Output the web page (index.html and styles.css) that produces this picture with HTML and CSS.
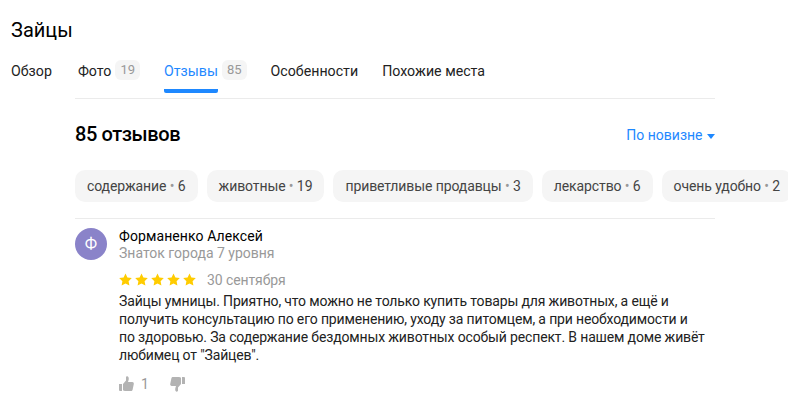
FILE: index.html
```html
<!DOCTYPE html>
<html lang="ru">
<head>
    <meta charset="UTF-8">
    <title>Зайцы</title>
    <link rel="stylesheet" href="styles.css">
</head>
<body>
    <header class="header">
        <h1 class="title">Зайцы</h1>
        <nav class="tabs">
            <a class="tab"><span class="tab-label">Обзор</span></a>
            <a class="tab"><span class="tab-label">Фото</span> <span class="tab-count">19</span></a>
            <a class="tab tab-active"><span class="tab-label">Отзывы</span> <span class="tab-count">85</span></a>
            <a class="tab"><span class="tab-label">Особенности</span></a>
            <a class="tab"><span class="tab-label">Похожие места</span></a>
        </nav>
    </header>
    <main class="content">
        <div class="reviews-head">
            <h2 class="reviews-title">85 отзывов</h2>
            <a class="sort">По новизне <span class="sort-arrow"></span></a>
        </div>
        <div class="chips">
            <span class="chip">содержание <i>•</i> 6</span>
            <span class="chip">животные <i>•</i> 19</span>
            <span class="chip">приветливые продавцы <i>•</i> 3</span>
            <span class="chip">лекарство <i>•</i> 6</span>
            <span class="chip">очень удобно <i>•</i> 2</span>
        </div>
        <article class="review">
            <div class="author">
                <div class="avatar">Ф</div>
                <div>
                    <div class="author-name">Форманенко Алексей</div>
                    <div class="author-level">Знаток города 7 уровня</div>
                </div>
            </div>
            <div class="review-body">
                <div class="rating">
                    <svg class="stars" width="77" height="14" viewBox="0 0 77 14">
                        <g fill="#fc0">
                            <path d="M6.500.5l1.900 4 4.400.6-3.200 3.100.8 4.400-3.900-2.100-3.900 2.100.8-4.400L.2 5.100l4.400-.6z"/>
                            <path transform="translate(16)" d="M6.500.5l1.900 4 4.400.6-3.200 3.100.8 4.400-3.900-2.100-3.900 2.100.8-4.400L.2 5.100l4.400-.6z"/>
                            <path transform="translate(32)" d="M6.500.5l1.900 4 4.400.6-3.200 3.100.8 4.400-3.900-2.100-3.900 2.100.8-4.400L.2 5.100l4.400-.6z"/>
                            <path transform="translate(48)" d="M6.500.5l1.900 4 4.400.6-3.200 3.100.8 4.400-3.900-2.100-3.900 2.100.8-4.400L.2 5.100l4.400-.6z"/>
                            <path transform="translate(64)" d="M6.500.5l1.900 4 4.400.6-3.200 3.100.8 4.400-3.900-2.100-3.900 2.100.8-4.400L.2 5.100l4.400-.6z"/>
                        </g>
                    </svg>
                    <span class="review-date">30 сентября</span>
                </div>
                <p class="review-text">Зайцы умницы. Приятно, что можно не только купить товары для животных, а ещё и<br>получить консультацию по его применению, уходу за питомцем, а при необходимости и<br>по здоровью. За содержание бездомных животных особый респект. В нашем доме живёт<br>любимец от "Зайцев".</p>
                <div class="votes">
                    <svg width="15" height="16" viewBox="0 0 15 16"><path fill="#b3b3b3" d="M0 8h3v7H1a1 1 0 0 1-1-1zM4 8l3-3.500V1.500C7 .6 8 0 8.800.5 9.800 1 10 2.500 9.600 4L9 6h4.300c1 0 1.700.9 1.500 1.900l-1.200 5.800c-.2.800-.8 1.300-1.600 1.300H6c-.8 0-1.400-.3-2-.8z"/></svg>
                    <span class="vote-count">1</span>
                    <svg class="vote-down" width="15" height="16" viewBox="0 0 15 16"><path fill="#b3b3b3" d="M15 8h-3V1h2a1 1 0 0 1 1 1zM11 8l-3 3.500v3c0 .9-1 1.500-1.800 1C5.200 15 5 13.500 5.400 12L6 10H1.700C.7 10 0 9.100.2 8.100l1.200-5.800C1.600 1.500 2.200 1 3 1h6c.8 0 1.400.3 2 .8z"/></svg>
                </div>
            </div>
        </article>
    </main>
</body>
</html>
```

FILE: styles.css
```css
html,
body {
    overflow: hidden;
}
body {
    margin: 0;
    background-color: #fff;
    color: #000;
    font-family: 'Roboto', 'Noto Sans', sans-serif;
    font-size: 14px;
}
.header {
    padding: 18px 0 0 11px;
}
.title {
    margin: 0;
    font-size: 20px;
    font-weight: 400;
    line-height: 24px;
}
.tabs {
    display: flex;
    gap: 24px;
    margin-top: 16px;
    height: 40px;
}
.tab {
    display: flex;
    align-items: flex-start;
    gap: 4px;
    line-height: 26px;
    font-size: 14.2px;
    color: #222;
}
.tab:first-child {
    margin-right: 2px;
}
.tab-label {
    display: block;
    height: 35px;
    box-sizing: border-box;
}
.tab-active {
    color: #1e88ff;
}
.tab-active .tab-label {
    border-bottom: 4px solid #1e88ff;
    border-radius: 2px;
}
.tab-count {
    padding: 0 5px;
    height: 20px;
    margin-top: 2px;
    line-height: 20px;
    font-size: 13px;
    color: #999;
    background-color: #f5f5f5;
    border-radius: 6px;
}
.content {
    width: 640px;
    margin-left: 75px;
    border-top: 1px solid #ebebeb;
}
.reviews-head {
    display: flex;
    justify-content: space-between;
    align-items: center;
    margin-top: 21px;
}
.reviews-title {
    margin: 0;
    font-size: 20px;
    font-weight: 500;
    line-height: 28px;
    letter-spacing: -0.4px;
}
.sort {
    padding-top: 2px;
    color: #1e88ff;
}
.sort-arrow {
    display: inline-block;
    border: 4px solid transparent;
    border-top: 5px solid #1e88ff;
    border-bottom: 0;
    margin-left: 1px;
    vertical-align: 1px;
}
.chips {
    display: flex;
    gap: 9px;
    margin-top: 22px;
    width: 713px;
    overflow: hidden;
    letter-spacing: -0.1px;
}
.chip {
    flex: none;
    padding: 0 12px;
    height: 32px;
    line-height: 32px;
    color: #444;
    background-color: #f5f5f5;
    border-radius: 10px;
    white-space: nowrap;
}
.chip i {
    font-style: normal;
    color: #999;
}
.review {
    margin-top: 16px;
    padding-top: 9px;
    border-top: 1px solid #ebebeb;
}
.author {
    display: flex;
    gap: 12px;
}
.avatar {
    width: 32px;
    height: 32px;
    border-radius: 50%;
    background-color: #8a83c9;
    color: #fff;
    text-align: center;
    line-height: 32px;
    font-size: 16px;
}
.author-name {
    line-height: 17px;
    letter-spacing: 0.1px;
}
.author-level {
    line-height: 16px;
    color: #999;
}
.review-body {
    padding-left: 44px;
}
.rating {
    display: flex;
    align-items: center;
    gap: 11px;
    margin-top: 9px;
    height: 20px;
}
.review-date {
    color: #999;
    letter-spacing: -0.1px;
}
.review-text {
    margin: 2px 0 0;
    line-height: 18px;
    color: #222;
    letter-spacing: -0.15px;
}
.votes {
    display: flex;
    align-items: center;
    margin-top: 12px;
    color: #999;
}
.vote-count {
    margin-left: 7px;
}
.vote-down {
    margin-left: 21px;
}
```
